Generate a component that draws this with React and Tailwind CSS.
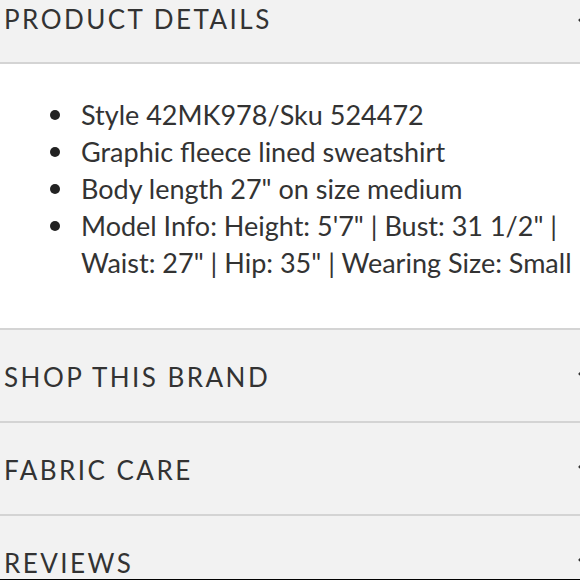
const bullets = [
  'Style 42MK978/Sku 524472',
  'Graphic fleece lined sweatshirt',
  'Body length 27" on size medium',
  'Model Info: Height: 5\'7" | Bust: 31 1/2" | Waist: 27" | Hip: 35" | Wearing Size: Small',
];

const sections = ['SHOP THIS BRAND', 'FABRIC CARE', 'REVIEWS'];

const Chevron = ({ up }) => (
  <svg
    width="16"
    height="10"
    viewBox="0 0 16 10"
    className="mr-[-14px] shrink-0"
    fill="none"
    stroke="#333"
    strokeWidth="2.5"
  >
    {up ? <path d="M1 9 L8 2 L15 9" /> : <path d="M1 1 L8 8 L15 1" />}
  </svg>
);

export default function App() {
  return (
    <div
      className="h-[580px] w-[580px] overflow-hidden border-b border-black bg-white text-[#333]"
      style={{ fontFamily: "Lato, 'Open Sans', sans-serif" }}
    >
      {/* PRODUCT DETAILS HEADER (scrolled, top cut off) */}
      <div className="flex h-[64px] items-start justify-between border-b-2 border-[#d4d4d4] bg-[#f2f2f2] pl-[4px] pt-[3px]">
        <h2 className="text-[26px] leading-[32px] tracking-[0.095em]">PRODUCT DETAILS</h2>
        <div className="mt-[9px]">
          <Chevron up />
        </div>
      </div>

      {/* DETAILS BODY */}
      <div className="h-[264px] pt-[32px]">
        <ul className="text-[27px] leading-[37px]">
          {bullets.map((b) => (
            <li key={b} className="flex">
              <span className="flex w-[81px] shrink-0 justify-end pr-[21px] pt-[14px]">
                <span className="h-[10px] w-[10px] rounded-full bg-[#222]" />
              </span>
              <span>{b}</span>
            </li>
          ))}
        </ul>
      </div>

      {/* COLLAPSED SECTIONS */}
      {sections.map((s) => (
        <div
          key={s}
          className="flex h-[93px] items-center justify-between border-t-2 border-[#d4d4d4] bg-[#f2f2f2] pl-[4px] pt-[2px]"
        >
          <h2 className="text-[26px] leading-[32px] tracking-[0.095em]">{s}</h2>
          <Chevron />
        </div>
      ))}
    </div>
  );
}
